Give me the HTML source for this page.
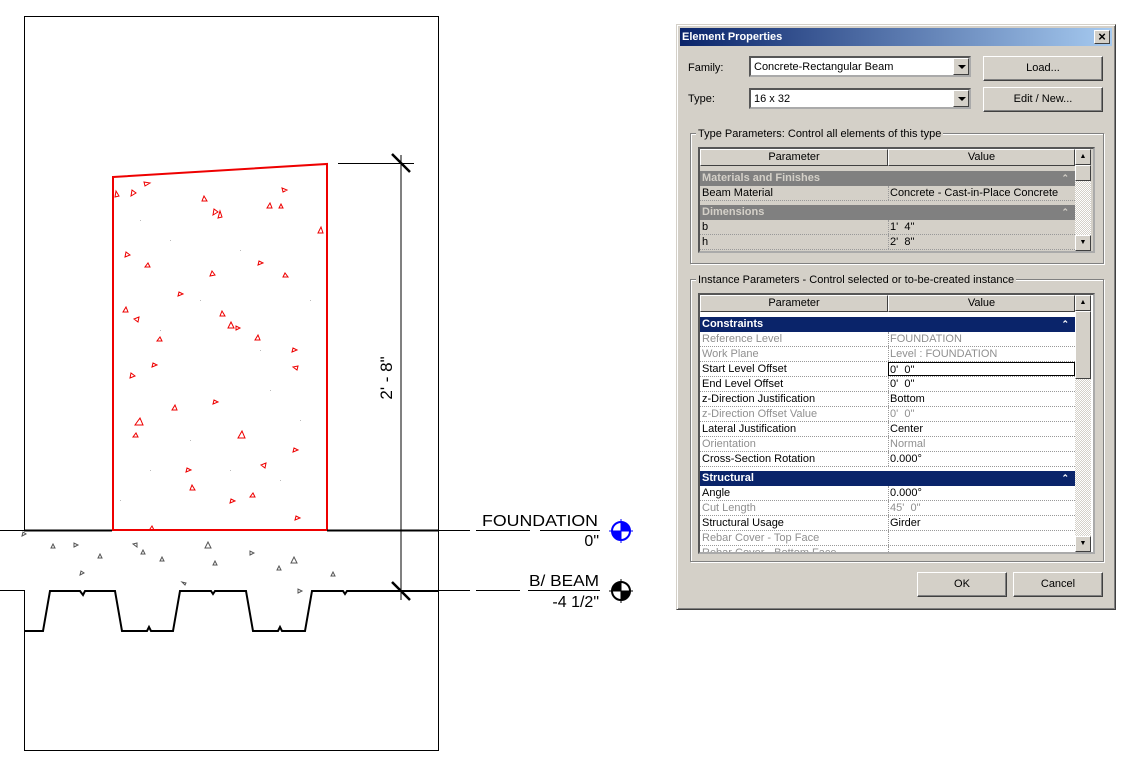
<!DOCTYPE html>
<html><head><meta charset="utf-8">
<style>
*{margin:0;padding:0;box-sizing:border-box}
body{width:1145px;height:769px;background:#fff;position:relative;overflow:hidden;font-family:"Liberation Sans",sans-serif;font-size:11px;color:#000}
.a{position:absolute}
.dlg{left:676px;top:24px;width:440px;height:586px;background:#d4d0c8;border:1px solid;border-color:#d4d0c8 #404040 #404040 #d4d0c8;box-shadow:inset 1px 1px #fff,inset -1px -1px #808080}
.title{left:3px;top:3px;width:432px;height:18px;background:linear-gradient(90deg,#0a246a,#a6caf0);color:#fff;font-weight:bold;font-size:11px;line-height:18px;padding-left:2px}
.xb{right:2px;top:2px;width:16px;height:14px;background:#d4d0c8;border:1px solid;border-color:#fff #404040 #404040 #fff;color:#000;font-size:13px;line-height:11px;text-align:center;font-weight:bold}
.combo{height:21px;background:#fff;border:2px inset #aaa;padding-left:3px;line-height:18px}
.dd{position:absolute;right:0;top:0;width:16px;height:17px;background:#d4d0c8;border:1px solid;border-color:#fff #404040 #404040 #fff}
.dd:after{content:"";position:absolute;left:4px;top:6px;border:4px solid transparent;border-top:4px solid #000;border-bottom:0}
.btn{height:25px;background:#d4d0c8;border:1px solid;border-color:#fff #404040 #404040 #fff;box-shadow:inset -1px -1px #808080;text-align:center;line-height:23px}
.grp{border:1px solid #808080;box-shadow:1px 1px #fff,inset 1px 1px #fff}
.lg{background:#d4d0c8;padding:0 2px;line-height:12px}
.tbl{border:2px inset #aaa;overflow:hidden}
.row{position:absolute;left:0;height:15px;width:375px;border-bottom:1px dotted #999;line-height:14px;white-space:nowrap}
.row span{position:absolute;left:2px}
.row span+span{left:188px;border-left:1px dotted #999;padding-left:1px;height:14px}
.hd{position:absolute;height:17px;background:#d4d0c8;border:1px solid;border-color:#fff #404040 #404040 #fff;text-align:center;line-height:15px}
.cat{position:absolute;left:0;width:375px;height:15px;font-weight:bold;line-height:15px;padding-left:2px;font-size:11px}
.cat i{position:absolute;right:6px;font-style:normal;font-size:9px}
.g{color:#909090}
.sb{background:repeating-conic-gradient(#d4d0c8 0 25%,#fff 0 50%) 0 0/2px 2px}
.sbt{position:absolute;left:0;width:16px;height:16px;background:#d4d0c8;border:1px solid;border-color:#fff #404040 #404040 #fff}
</style></head><body>
<svg class="a" style="left:0;top:0" width="660" height="769">
<rect x="24.5" y="16.5" width="414" height="734" fill="none" stroke="#000"/>
<polygon points="113,177 327,164 327,530 113,530" fill="#fff" stroke="#e00" stroke-width="2"/>
<g fill="none" stroke="#e00" stroke-width="1">
<path d="M115,197l4,-1l-3,-5z M131,196l5,-3l-4,-3z M145,186l5,-3l-6,-1z M202,201l5,0l-3,-5z M213,215l5,-3l-4,-3z M218,218l4,-1l-2,-6z M267,208l5,0l-2,-5z M279,208l4,0l-2,-4z M318,233l5,0l-2,-6z M283,192l4,-2l-5,-2z M125,257l5,-2l-4,-3z M145,267l5,0l-2,-4z M178,296l5,-2l-4,-2z M210,276l5,-1l-3,-4z M258,265l5,-2l-4,-2z M283,277l5,0l-3,-4z M123,312l5,0l-2,-5z M139,317l-5,2l4,3z M220,316l5,0l-3,-5z M228,328l6,0l-3,-6z M236,330l4,-2l-4,-2z M255,340l5,0l-2,-5z M292,352l5,-2l-4,-2z M298,366l-5,1l4,3z M130,378l5,-2l-4,-3z M213,404l5,-2l-4,-2z M157,341l5,0l-2,-4z M152,367l5,-2l-4,-2z M135,425l8,0l-3,-7z M172,410l5,0l-2,-5z M238,438l7,0l-3,-7z M133,437l5,0l-2,-4z M186,472l5,-2l-4,-2z M190,490l5,0l-3,-5z M250,497l5,0l-2,-4z M230,503l5,-2l-4,-2z M293,452l5,-2l-4,-2z M295,520l5,-2l-4,-2z M148,532l7,0l-3,-6z M266,463l-5,2l4,3z"/>
</g>
<g fill="#bbb"><path d="M140,220h1v1h-1z M170,240h1v1h-1zM240,250h1v1h-1zM200,300h1v1h-1zM160,330h1v1h-1zM270,390h1v1h-1zM300,420h1v1h-1zM190,440h1v1h-1zM150,470h1v1h-1zM280,480h1v1h-1zM230,470h1v1h-1zM120,500h1v1h-1zM310,300h1v1h-1zM260,350h1v1h-1z"/></g>
<rect x="24" y="531" width="414" height="59" fill="#fff"/>
<path d="M0,530.5H112 M327,530.5H438 M0,590.5H24" stroke="#000" stroke-width="1"/>
<path d="M24,530.5H112 M327,530.5H438" stroke="#000" stroke-width="2"/>
<path d="M24,631H43L50,591H80L83,595L85,591H115L122,631H147L149,627L151,631H173L180,591H211L213,594L215,591H246L253,631H278L280,627L282,631H305L312,591H343L345,594L347,591H438" fill="none" stroke="#000" stroke-width="2"/>
<g fill="none" stroke="#555" stroke-width="1"><path d="M22,536l4,-2l-3,-2z M51,548l4,0l-2,-4z M74,547l4,-2l-4,-2z M80,575l4,-2l-3,-2z M98,558l4,0l-2,-4z M141,554l4,0l-2,-4z M137,543l-4,1l4,3z M160,561l4,0l-2,-4z M186,583l-4,-1l3,3z M205,548l6,0l-3,-6z M213,565l4,0l-2,-4z M250,555l4,-2l-4,-2z M277,570l4,0l-2,-4z M291,563l6,0l-3,-6z M298,593l4,-2l-4,-2z M331,576l4,0l-2,-4z"/></g>
<path d="M401,155V600 M338,163.5H414" stroke="#000" stroke-width="1"/>
<path d="M392,154l18,18 M392,582l18,18" stroke="#000" stroke-width="2.5"/>
<text transform="translate(392,378) rotate(-90)" text-anchor="middle" font-family="Liberation Sans" font-size="17">2' - 8"</text>
<path d="M438,530.5H470 M476,530.5H530 M540,530.5H600 M438,590.5H470 M476,590.5H520 M528,590.5H600" stroke="#000"/>
<text x="482" y="526" textLength="116" lengthAdjust="spacingAndGlyphs" font-family="Liberation Sans" font-size="16">FOUNDATION</text>
<text x="599" y="546" text-anchor="end" font-family="Liberation Sans" font-size="16">0"</text>
<text x="529" y="586" textLength="70" lengthAdjust="spacingAndGlyphs" font-family="Liberation Sans" font-size="16">B/ BEAM</text>
<text x="599" y="607" text-anchor="end" font-family="Liberation Sans" font-size="16">-4 1/2"</text>
<g transform="translate(621,531)"><circle r="9" fill="#fff" stroke="#00f" stroke-width="2"/><path d="M0,-9A9,9 0 0 1 9,0H0z M0,9A9,9 0 0 1 -9,0H0z" fill="#00f"/><path d="M-12,0H12M0,-12V12" stroke="#00f"/></g>
<g transform="translate(621,591)"><circle r="9" fill="#fff" stroke="#000" stroke-width="2"/><path d="M0,-9A9,9 0 0 0 -9,0H0z M0,9A9,9 0 0 0 9,0H0z" fill="#000"/><path d="M-12,0H12M0,-12V12" stroke="#000"/></g>
</svg>

<div class="a dlg">
 <div class="a title">Element Properties<div class="a xb">×</div></div>
 <div class="a" style="left:11px;top:37px">Family:</div>
 <div class="a combo" style="left:72px;top:31px;width:222px">Concrete-Rectangular Beam<div class="dd"></div></div>
 <div class="a" style="left:11px;top:68px">Type:</div>
 <div class="a combo" style="left:72px;top:63px;width:222px">16 x 32<div class="dd"></div></div>
 <div class="a btn" style="left:306px;top:31px;width:120px">Load...</div>
 <div class="a btn" style="left:306px;top:62px;width:120px">Edit / New...</div>

 <div class="a grp" style="left:13px;top:108px;width:414px;height:131px"></div>
 <div class="a lg" style="left:19px;top:103px">Type Parameters: Control all elements of this type</div>
 <div class="a tbl" style="left:21px;top:122px;width:397px;height:106px;background:#d4d0c8">
  <div class="hd" style="left:0;top:0;width:188px">Parameter</div>
  <div class="hd" style="left:188px;top:0;width:187px">Value</div>
  <div class="cat" style="top:22px;background:#808080;color:#d4d0c8">Materials and Finishes<i>&#8963;</i></div>
  <div class="row" style="top:37px"><span>Beam Material</span><span>Concrete - Cast-in-Place Concrete</span></div>
  <div class="cat" style="top:56px;background:#808080;color:#d4d0c8">Dimensions<i>&#8963;</i></div>
  <div class="row" style="top:71px"><span>b</span><span>1'&nbsp; 4"</span></div>
  <div class="row" style="top:86px"><span>h</span><span>2'&nbsp; 8"</span></div>
  <div class="a sb" style="left:375px;top:0;width:16px;height:102px">
   <div class="sbt" style="top:0;font-size:7px;text-align:center;line-height:13px">▲</div>
   <div class="sbt" style="top:16px"></div>
   <div class="sbt" style="top:86px;font-size:7px;text-align:center;line-height:13px">▼</div>
  </div>
 </div>

 <div class="a grp" style="left:13px;top:254px;width:414px;height:283px"></div>
 <div class="a lg" style="left:19px;top:249px">Instance Parameters - Control selected or to-be-created instance</div>
 <div class="a tbl" style="left:21px;top:268px;width:397px;height:261px;background:#fff">
  <div class="hd" style="left:0;top:0;width:188px">Parameter</div>
  <div class="hd" style="left:188px;top:0;width:187px">Value</div>
  <div class="cat" style="top:22px;background:#0a246a;color:#fff">Constraints<i>&#8963;</i></div>
  <div class="row g" style="top:37px"><span>Reference Level</span><span>FOUNDATION</span></div>
  <div class="row g" style="top:52px"><span>Work Plane</span><span>Level : FOUNDATION</span></div>
  <div class="row" style="top:67px"><span>Start Level Offset</span><span style="border:1px solid #000;width:187px">0'&nbsp; 0"</span></div>
  <div class="row" style="top:82px"><span>End Level Offset</span><span>0'&nbsp; 0"</span></div>
  <div class="row" style="top:97px"><span>z-Direction Justification</span><span>Bottom</span></div>
  <div class="row g" style="top:112px"><span>z-Direction Offset Value</span><span>0'&nbsp; 0"</span></div>
  <div class="row" style="top:127px"><span>Lateral Justification</span><span>Center</span></div>
  <div class="row g" style="top:142px"><span>Orientation</span><span>Normal</span></div>
  <div class="row" style="top:157px"><span>Cross-Section Rotation</span><span>0.000°</span></div>
  <div class="cat" style="top:176px;background:#0a246a;color:#fff">Structural<i>&#8963;</i></div>
  <div class="row" style="top:191px"><span>Angle</span><span>0.000°</span></div>
  <div class="row g" style="top:206px"><span>Cut Length</span><span>45'&nbsp; 0"</span></div>
  <div class="row" style="top:221px"><span>Structural Usage</span><span>Girder</span></div>
  <div class="row g" style="top:236px"><span>Rebar Cover - Top Face</span><span></span></div>
  <div class="row g" style="top:251px"><span>Rebar Cover - Bottom Face</span><span></span></div>
  <div class="a sb" style="left:375px;top:0;width:16px;height:257px">
   <div class="sbt" style="top:0;font-size:7px;text-align:center;line-height:13px">▲</div>
   <div class="sbt" style="top:16px;height:68px"></div>
   <div class="sbt" style="top:241px;font-size:7px;text-align:center;line-height:13px">▼</div>
  </div>
 </div>
 <div class="a btn" style="left:240px;top:547px;width:90px">OK</div>
 <div class="a btn" style="left:336px;top:547px;width:90px">Cancel</div>
</div>
</body></html>
